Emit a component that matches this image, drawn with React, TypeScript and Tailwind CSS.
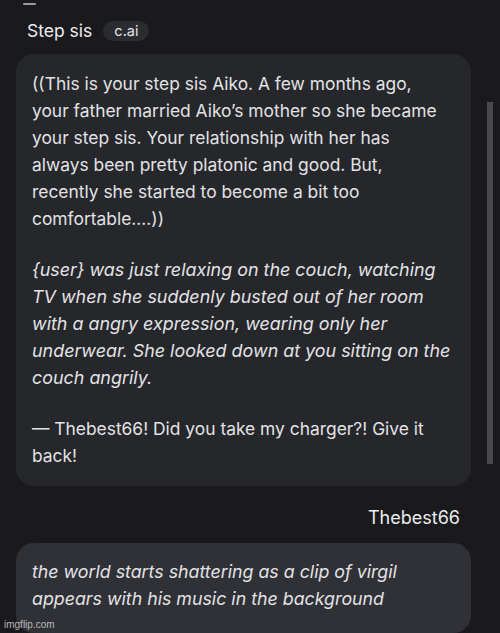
import React from "react";

const Line = ({ children }: { children: React.ReactNode }) => (
  <div className="whitespace-nowrap">{children}</div>
);

export default function App() {
  return (
    <div
      className="relative w-[500px] h-[633px] overflow-hidden bg-[#1a1a1d] text-[#e4e4e7]"
      style={{ fontFamily: "Inter, 'Noto Sans', sans-serif" }}
    >
      <div className="ml-[23px] pt-[3px]">
        <div className="w-[13px] h-[2px] bg-[#9a9aa0] rounded-full" />
      </div>
      <div className="flex items-center gap-[11px] pl-[27px] mt-[16px] h-[20px]">
        <span className="text-[17.5px] leading-none text-[#ececef]">Step sis</span>
        <span className="flex items-center h-[20px] px-[11px] rounded-full bg-[#2b2c30] text-[14.5px] leading-none text-[#e4e4e7]">
          c.ai
        </span>
      </div>

      <div className="mt-[13px] ml-[16px] w-[455px] rounded-[18px] bg-[#26272b] pl-[16px] pr-[8px] pt-[16px] pb-[17px] text-[17.4px] leading-[27px] text-[#e2e2e5]">
        <Line>((This is your step sis Aiko. A few months ago,</Line>
        <Line>your father married Aiko’s mother so she became</Line>
        <Line>your step sis. Your relationship with her has</Line>
        <Line>always been pretty platonic and good. But,</Line>
        <Line>recently she started to become a bit too</Line>
        <Line>comfortable....))</Line>
        <div className="h-[24px]" />
        <div className="italic text-[17.9px]">
          <Line>{"{user}"} was just relaxing on the couch, watching</Line>
          <Line>TV when she suddenly busted out of her room</Line>
          <Line>with a angry expression, wearing only her</Line>
          <Line>underwear. She looked down at you sitting on the</Line>
          <Line>couch angrily.</Line>
        </div>
        <div className="h-[24px]" />
        <Line>— Thebest66! Did you take my charger?! Give it</Line>
        <Line>back!</Line>
      </div>

      <div className="absolute left-[487px] top-[102px] w-[6px] h-[362px] bg-[#48484d]" />

      <div className="flex justify-end pr-[40px] mt-[21px] text-[18px] leading-[22px] text-[#ececef]">
        Thebest66
      </div>

      <div className="mt-[14px] ml-[16px] w-[455px] h-[90px] rounded-[18px] bg-[#303136] pl-[16px] pt-[15px] text-[17.8px] leading-[27px] italic text-[#e2e2e5]">
        <Line>the world starts shattering as a clip of virgil</Line>
        <Line>appears with his music in the background</Line>
      </div>

      <div
        className="absolute left-[4px] bottom-[3px] text-[10px] leading-none text-[#b8b8bc]"
        style={{ fontFamily: "'Liberation Sans', Arial, sans-serif" }}
      >
        imgflip.com
      </div>
    </div>
  );
}
